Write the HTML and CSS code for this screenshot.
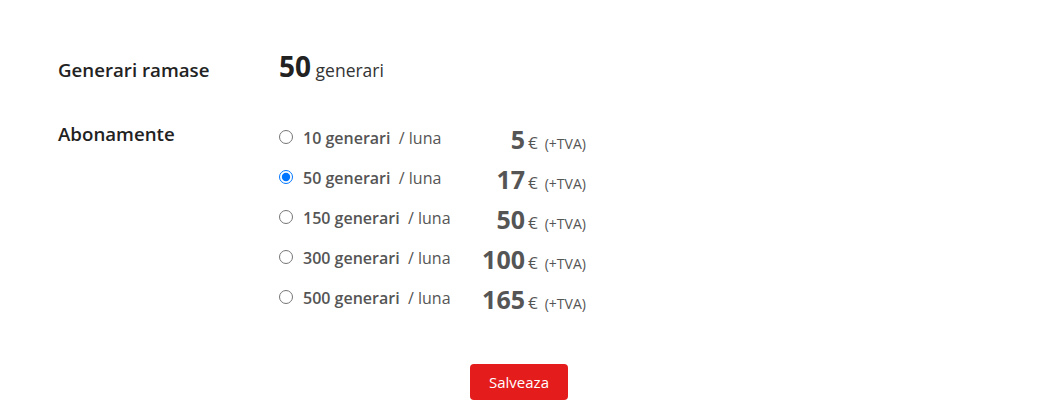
FILE: index.html
```html
<!DOCTYPE html>
<html>
<head>
<meta charset="utf-8">
<link rel="stylesheet" href="styles.css">
</head>
<body>
<div class="page">
  <div class="row row-remaining">
    <div class="label">Generari ramase</div>
    <div class="value"><span class="big">50</span> <span class="unit">generari</span></div>
  </div>
  <div class="row row-subs">
    <div class="label">Abonamente</div>
    <div class="plans">
      <label class="plan"><input type="radio" name="plan"><span class="plan-name"><b>10 generari</b>&nbsp; / luna</span><span class="price-box"><span class="price">5</span><span class="cur">€</span><span class="vat">(+TVA)</span></span></label>
      <label class="plan"><input type="radio" name="plan" checked><span class="plan-name"><b>50 generari</b>&nbsp; / luna</span><span class="price-box"><span class="price">17</span><span class="cur">€</span><span class="vat">(+TVA)</span></span></label>
      <label class="plan"><input type="radio" name="plan"><span class="plan-name"><b>150 generari</b>&nbsp; / luna</span><span class="price-box"><span class="price">50</span><span class="cur">€</span><span class="vat">(+TVA)</span></span></label>
      <label class="plan"><input type="radio" name="plan"><span class="plan-name"><b>300 generari</b>&nbsp; / luna</span><span class="price-box"><span class="price">100</span><span class="cur">€</span><span class="vat">(+TVA)</span></span></label>
      <label class="plan"><input type="radio" name="plan"><span class="plan-name"><b>500 generari</b>&nbsp; / luna</span><span class="price-box"><span class="price">165</span><span class="cur">€</span><span class="vat">(+TVA)</span></span></label>
    </div>
  </div>
  <div class="actions">
    <button class="save" type="button">Salveaza</button>
  </div>
</div>
</body>
</html>
```

FILE: styles.css
```css
html, body {
  margin: 0;
  padding: 0;
  background: #fff;
}
body {
  font-family: "Open Sans", "Liberation Sans", sans-serif;
  color: #333;
}
.page {
  padding: 48px 0 0 58px;
}
.row {
  display: flex;
}
.label {
  width: 221px;
  font-size: 18.7px;
  line-height: 25px;
  font-weight: 600;
  color: #222;
}
.row-remaining {
  align-items: baseline;
}
.value {
  font-size: 17.5px;
  line-height: 36px;
}
.big {
  font-size: 28px;
  line-height: 36px;
  font-weight: 700;
  color: #222;
}
.unit {
  font-size: 17.5px;
  color: #333;
}
.row-subs {
  margin-top: 33px;
  align-items: flex-start;
}
.plans {
  display: flex;
  flex-direction: column;
  margin-top: 6px;
}
.plan {
  display: flex;
  align-items: flex-start;
  height: 40px;
  color: #555;
  font-size: 16px;
}
.plan input {
  margin: 3px 10px 0 0;
  width: 14px;
  height: 14px;
  flex: none;
}
.plan-name {
  width: 160px;
  line-height: 22px;
  white-space: nowrap;
}
.plan-name b {
  font-weight: 600;
}
.price-box {
  display: flex;
  align-items: baseline;
  line-height: 24px;
}
.price {
  width: 62px;
  text-align: right;
  font-size: 25px;
  font-weight: 700;
  color: #555;
}
.cur {
  font-size: 17px;
  padding-left: 3px;
}
.vat {
  font-size: 14px;
  padding-left: 7px;
}
.actions {
  display: flex;
  justify-content: center;
  margin: 37px 0 0 -60px;
}
.save {
  width: 98px;
  height: 36px;
  border: none;
  border-radius: 4px;
  background: #e41c1c;
  color: #fff;
  font-family: inherit;
  font-size: 15px;
}
```
